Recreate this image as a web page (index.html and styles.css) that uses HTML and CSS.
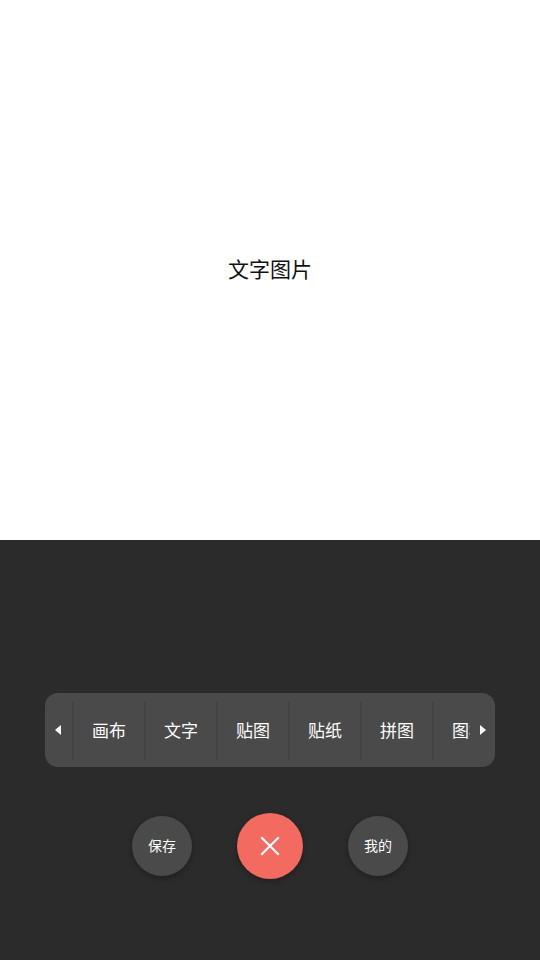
FILE: index.html
```html
<!DOCTYPE html>
<html lang="zh-CN">
<head>
<meta charset="utf-8">
<title>文字图片</title>
<link rel="stylesheet" href="styles.css">
</head>
<body>
<div class="app">
  <div class="canvas">
    <span class="canvas-title">文字图片</span>
  </div>
  <div class="panel">
    <div class="toolbar">
      <div class="arrow arrow-left"><span class="tri tri-left"></span></div>
      <div class="tabs">
        <div class="tab">画布</div>
        <div class="tab">文字</div>
        <div class="tab">贴图</div>
        <div class="tab">贴纸</div>
        <div class="tab">拼图</div>
        <div class="tab">图标</div>
      </div>
      <div class="arrow arrow-right"><span class="tri tri-right"></span></div>
    </div>
    <div class="actions">
      <div class="round round-gray">保存</div>
      <div class="round round-red">
        <svg width="22" height="22" viewBox="0 0 22 22"><path d="M3 3L19 19M19 3L3 19" stroke="#fff" stroke-width="2.2" stroke-linecap="square"/></svg>
      </div>
      <div class="round round-gray">我的</div>
    </div>
  </div>
</div>
</body>
</html>
```
FILE: styles.css
```css
html, body {
  margin: 0;
  padding: 0;
}
body {
  font-family: "Noto Sans CJK SC", "Noto Sans", sans-serif;
  background: #2b2b2b;
}
.app {
  width: 540px;
  height: 960px;
  display: flex;
  flex-direction: column;
}
.canvas {
  height: 540px;
  background: #fff;
  display: flex;
  align-items: center;
  justify-content: center;
  padding-bottom: 4px;
  box-sizing: border-box;
}
.canvas-title {
  font-size: 21px;
  color: #111;
  line-height: 1;
}
.panel {
  height: 420px;
  background: #2b2b2b;
  padding-top: 153px;
  box-sizing: border-box;
  display: flex;
  flex-direction: column;
}
.toolbar {
  margin: 0 45px;
  height: 74px;
  background: #4a4a4a;
  border-radius: 13px;
  display: flex;
  overflow: hidden;
}
.arrow {
  display: flex;
  align-items: center;
}
.arrow-left {
  width: 27px;
  padding-left: 10px;
  box-sizing: border-box;
}
.arrow-right {
  width: 25px;
  padding-left: 10px;
  box-sizing: border-box;
}
.tri {
  width: 0;
  height: 0;
  border-top: 5px solid transparent;
  border-bottom: 5px solid transparent;
}
.tri-left {
  border-right: 6px solid #fff;
}
.tri-right {
  border-left: 6px solid #fff;
}
.tabs {
  width: 398px;
  display: flex;
  overflow: hidden;
  padding: 9px 0 7px;
}
.tab {
  flex: 0 0 72px;
  box-sizing: border-box;
  border-left: 2px solid #424242;
  display: flex;
  align-items: center;
  justify-content: center;
  color: #fff;
  font-size: 17px;
  white-space: nowrap;
  padding-bottom: 3px;
}
.actions {
  margin-top: 46px;
  display: flex;
  justify-content: center;
  align-items: center;
  gap: 45px;
  height: 66px;
}
.round {
  border-radius: 50%;
  display: flex;
  align-items: center;
  justify-content: center;
  color: #fff;
}
.round-gray {
  width: 60px;
  height: 60px;
  background: #4a4a4a;
  font-size: 14px;
  padding-bottom: 3px;
  box-sizing: border-box;
  box-shadow: 0 2px 6px rgba(0, 0, 0, 0.3);
}
.round-red {
  width: 66px;
  height: 66px;
  background: #f36a61;
  box-shadow: 0 2px 6px rgba(0, 0, 0, 0.3);
}
```
